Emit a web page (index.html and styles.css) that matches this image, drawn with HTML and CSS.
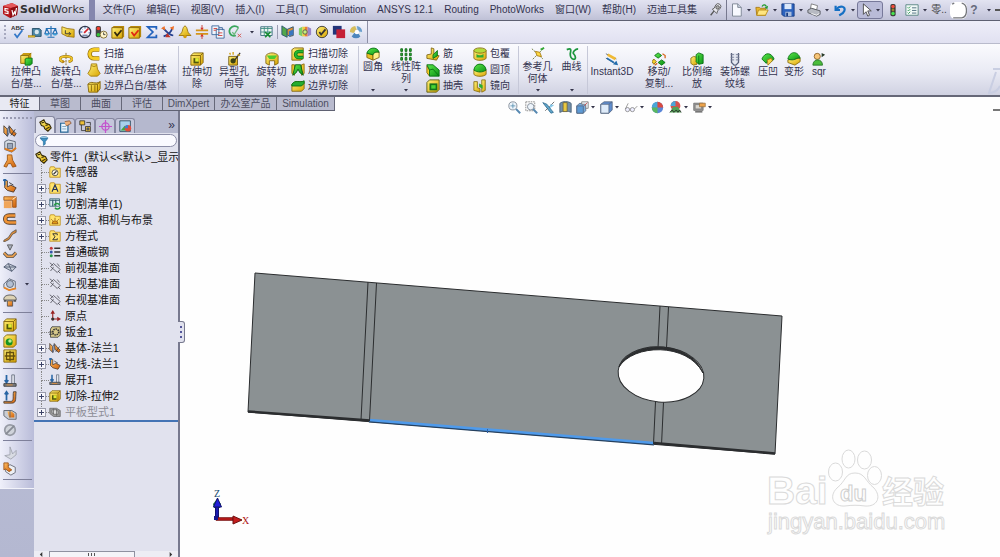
FILE: index.html
```html
<!DOCTYPE html>
<html lang="zh-CN">
<head>
<meta charset="utf-8">
<meta name="viewport" content="width=device-width, initial-scale=1">
<title>SolidWorks - 零件1</title>
<link rel="stylesheet" href="styles.css">
</head>
<body>
<svg class="sprite" aria-hidden="true">
<defs>
<linearGradient id="gold" x1="0" y1="0" x2="1" y2="1"><stop offset="0" stop-color="#fff27a"/><stop offset="1" stop-color="#d9a400"/></linearGradient>
<linearGradient id="green" x1="0" y1="0" x2="1" y2="1"><stop offset="0" stop-color="#5ce84a"/><stop offset="1" stop-color="#0b9416"/></linearGradient>
<linearGradient id="orange" x1="0" y1="0" x2="1" y2="1"><stop offset="0" stop-color="#ffbe62"/><stop offset="1" stop-color="#d0600a"/></linearGradient>
</defs>
<symbol id="caret" viewBox="0 0 6 6"><path d="M1 2h4L3 4.500z" fill="#333348"/></symbol>
<symbol id="logo" viewBox="0 0 16 16"><path d="M1 4 10 1l6 3-1 9-7 3-7-4z" fill="#b5161d"/><path d="M1 4l8 2 7-2-6-3z" fill="#e5585c"/><path d="M9 6l7-2-1 9-7 3z" fill="#8d0c13"/><path d="M6.500 7 3 6.500v2l3 1v2L2.500 11M10 8l1 5 1.500-3 .8 2 1.200-6" fill="none" stroke="#fff" stroke-width="1.200"/></symbol>
<symbol id="pin" viewBox="0 0 16 16"><path d="M3 14l4-5" stroke="#555" stroke-width="1.500"/><path d="M5 7l5 5 1-3 3-3a3 3 0 0 0-5-4L7 6z" fill="#e8e8ee" stroke="#555"/><circle cx="11" cy="5" r="2" fill="#aaa" stroke="#555"/></symbol>
<symbol id="new" viewBox="0 0 16 16"><path d="M4 1h6l4 4v10H4z" fill="#f7f9ff" stroke="#77808f"/><path d="M10 1v4h4" fill="#cdd6e6" stroke="#77808f"/></symbol>
<symbol id="open" viewBox="0 0 16 16"><path d="M1 5h4l1 1h6v8H2z" fill="#e9b62e" stroke="#a87912"/><path d="M4 8h11l-3 6H2z" fill="#ffe680" stroke="#b78a18"/><path d="M8 4c2-3 4-2 5 0" fill="none" stroke="#239a2d" stroke-width="1.500"/><path d="M15 3l-1 4-3-2z" fill="#239a2d"/></symbol>
<symbol id="save" viewBox="0 0 16 16"><path d="M1 1h14v14H3l-2-2z" fill="#2c62bd" stroke="#173b80"/><path d="M4 1h8v6H4z" fill="#dbe8fa"/><path d="M5 10h7v5H5z" fill="#aabddb"/><path d="M6 11h2v4H6z" fill="#173b80"/></symbol>
<symbol id="print" viewBox="0 0 16 16"><path d="M5 1l7 2-1 5-7-2z" fill="#fff" stroke="#777"/><path d="M1 8l4-2 10 3v4l-4 2-10-4z" fill="#b7bac2" stroke="#55585f"/><path d="M5 12l6 2 3-2" fill="none" stroke="#fff"/></symbol>
<symbol id="undo" viewBox="0 0 16 16"><path d="M3 3v5h5" fill="none" stroke="#1670c4" stroke-width="2.500"/><path d="M4 7c4-5 11-3 9 2-1 3-4 4-6 5" fill="none" stroke="#1670c4" stroke-width="2.500"/></symbol>
<symbol id="cursor" viewBox="0 0 16 16"><path d="M5 1v12l3-3 2 5 2-1-2-5h4z" fill="#fff" stroke="#444"/></symbol>
<symbol id="traffic" viewBox="0 0 16 16"><rect x="5" y="1" width="6" height="14" rx="2" fill="#3a3a36"/><circle cx="8" cy="4" r="2" fill="#f04a3c"/><circle cx="8" cy="8" r="1.600" fill="#9b8430"/><circle cx="8" cy="12" r="2" fill="#47e04f"/></symbol>
<symbol id="list" viewBox="0 0 16 16"><path d="M1 2h14v12H1z" fill="#f0f8f7" stroke="#54827f"/><path d="M3 5l1 1 2-2M3 8l1 1 2-2M3 11l1 1 2-2" fill="none" stroke="#27964a"/><path d="M8 5.500h5M8 8.500h5M8 11.500h5" stroke="#467"/></symbol>
<symbol id="disc" viewBox="0 0 16 16"><rect width="16" height="16" rx="5" fill="#fff"/><path d="M2 2l2-1M11 1c6 1 6 13 0 14H3" fill="none" stroke="#75777c" stroke-width="1.200"/></symbol>
<symbol id="spell" viewBox="0 0 16 16"><text x="0" y="6" font-family="Liberation Sans" font-size="7" font-weight="700" fill="#333">ABC</text><path d="M4 10l3 4 6-8" fill="none" stroke="#3478c8" stroke-width="2"/></symbol>
<symbol id="tape" viewBox="0 0 16 16"><path d="M5 4h8l2 2v7H5z" fill="#4d86a5" stroke="#244c64"/><circle cx="10" cy="8" r="2.500" fill="#d9e7ee"/><path d="M0 12h8v2H0z" fill="#e5bb31" stroke="#8b6f17" stroke-width=".5"/></symbol>
<symbol id="scale" viewBox="0 0 16 16"><path d="M8 1v12M2 4h12M4 14h8M3 4l-2 6h5L3 4M13 4l-3 6h5l-2-6" fill="none" stroke="#246fb3" stroke-width="1.300"/><path d="M1 10h5l-1 2H2zM10 10h5l-1 2h-3z" fill="#3fa0d8"/></symbol>
<symbol id="section" viewBox="0 0 16 16"><path d="M1 2l6 2 8 1v9l-8-1-6-3z" fill="url(#gold)" stroke="#9b7511"/><path d="M5 6v4h6M9 8l2 2-2 2" fill="none" stroke="#333"/></symbol>
<symbol id="gauge" viewBox="0 0 16 16"><circle cx="8" cy="8" r="6.500" fill="#f6f7fc" stroke="#32384a" stroke-width="1.500"/><path d="M7 9l5-5" stroke="#d1222c" stroke-width="2"/><path d="M8 2v2M2 8h3M12 9h2M4 4l1 1" stroke="#2250a0"/><path d="M5 12h6" stroke="#7a86a8" stroke-width="2"/></symbol>
<symbol id="trafclock" viewBox="0 0 16 16"><rect x="2" y="1" width="6" height="13" rx="2" fill="#444"/><circle cx="5" cy="4" r="2" fill="#f43b2c"/><circle cx="5" cy="11" r="2" fill="#31c83a"/><circle cx="11" cy="11" r="4" fill="#fff4ca" stroke="#7b682f"/><path d="M11 8.500V11h2" fill="none" stroke="#333"/></symbol>
<symbol id="checkgold" viewBox="0 0 16 16"><path d="M1 3l2-2h12v12l-2 2H1z" fill="#b6870a"/><path d="M1 3h12v12H1z" fill="url(#gold)" stroke="#8a670b"/><path d="M4 8l3 4 5-6" fill="none" stroke="#33290d" stroke-width="2"/></symbol>
<symbol id="checkred" viewBox="0 0 16 16"><path d="M1 3l2-2h12v12l-2 2H1z" fill="#b6870a"/><path d="M1 3h12v12H1z" fill="url(#gold)" stroke="#8a670b"/><path d="M4 8l3 4 5-6" fill="none" stroke="#e02712" stroke-width="2"/></symbol>
<symbol id="sigma" viewBox="0 0 16 16"><path d="M13 5V2H3l6 6-6 6h10v-3" fill="none" stroke="#2262bd" stroke-width="2"/></symbol>
<symbol id="arrows" viewBox="0 0 16 16"><path d="M2 3c2 2 6 8 12 9M13 3c-1 5-4 8-10 10" fill="none" stroke="#26418f" stroke-width="2"/><path d="M4 1L0 4l5 2zM15 1l-5 2 4 3z" fill="#f0732b"/><path d="M7 9l4 5H5z" fill="#c13427"/></symbol>
<symbol id="bell" viewBox="0 0 16 16"><path d="M8 1c4 2 1 7 7 11H1C7 8 4 3 8 1z" fill="url(#gold)" stroke="#987208"/><circle cx="8" cy="13" r="2" fill="#d29c0b"/></symbol>
<symbol id="thick" viewBox="0 0 16 16"><path d="M1 6h14M1 10h14" stroke="#d4941a" stroke-width="2"/><path d="M8 0v5M8 16v-5" stroke="#c4382b"/><path d="M6 3l2 3 2-3zM6 13l2-3 2 3z" fill="#d73427"/></symbol>
<symbol id="docs" viewBox="0 0 16 16"><path d="M1 1h8v10H1zM6 5h9v10H6z" fill="#f1f5fc" stroke="#3a669a"/><path d="M3 4h4M3 6h3M8 9h5M8 12h5" stroke="#d13b34"/><path d="M9 3h4v3" fill="none" stroke="#3a669a"/></symbol>
<symbol id="tol" viewBox="0 0 16 16"><path d="M12 3C7-1 0 3 2 9c1 3 4 4 7 3" fill="none" stroke="#39a65c" stroke-width="2"/><path d="M5 8l2 3 5-8" fill="none" stroke="#6bb97e" stroke-width="1.500"/><path d="M11 10l4 4m0-4l-4 4" stroke="#d24d46"/></symbol>
<symbol id="sheet" viewBox="0 0 16 16"><path d="M2 2h13v10H2z" fill="#eef7f3" stroke="#376a7c"/><path d="M2 4h13M6 2v10M10 2v10M2 8h13" stroke="#3f8d82"/><path d="M7 8l6 6m0-6l-6 6" stroke="#168c31" stroke-width="2"/></symbol>
<symbol id="flag" viewBox="0 0 16 16"><path d="M1 1l6 4v9l-6-3z" fill="#52a84a" stroke="#28516c"/><path d="M7 5l7-3v10l-4 1-3-2z" fill="#de9034" stroke="#28516c"/><path d="M9 7l5-2v6l-5 2z" fill="#3977c0"/></symbol>
<symbol id="book" viewBox="0 0 16 16"><path d="M1 4l4-2v11l-4-2z" fill="#7ccd64"/><path d="M5 2h3v11H5z" fill="#e9cf3e"/><path d="M8 2h3v11H8z" fill="#ed7c34"/><path d="M11 2l4 2v7l-4 2z" fill="#9a86c8"/><circle cx="8" cy="8" r="2.500" fill="#c6f078" stroke="#555"/></symbol>
<symbol id="okround" viewBox="0 0 16 16"><circle cx="8" cy="8" r="6.500" fill="url(#gold)" stroke="#333"/><path d="M5 8l2 3 5-6" fill="none" stroke="#333" stroke-width="2"/></symbol>
<symbol id="squares" viewBox="0 0 16 16"><path d="M1 1h10v10H1z" fill="#23357a"/><path d="M5 5h10v10H5z" fill="#c51f36"/></symbol>
<symbol id="ball" viewBox="0 0 16 16"><circle cx="8" cy="8" r="7" fill="#dce5ef"/><path d="M1 8a7 7 0 0 1 6-7l2 5-4 3z" fill="#d6bd5b"/><path d="M9 1a7 7 0 0 1 6 7l-5-1z" fill="#6c9fcd"/><path d="M3 13l3-4 5 1 2 3a7 7 0 0 1-10 0z" fill="#4d86bd"/><circle cx="9" cy="8" r="2.500" fill="#fff"/></symbol>
<symbol id="extrude" viewBox="0 0 16 16"><path d="M2 4l3-3h9v9l-3 3H2z" fill="#c89b12"/><path d="M2 4h9v9H2z" fill="url(#gold)" stroke="#8b6d10"/><path d="M11 4l3-3" stroke="#8b6d10"/><path d="M7 8l2-1h6v6l-2 2H7z" fill="url(#green)" stroke="#087014"/></symbol>
<symbol id="revolve" viewBox="0 0 16 16"><path d="M8 1v14" stroke="#806413" stroke-dasharray="3 1"/><path d="M5 11C-1 10 0 5 8 5s9 5 3 6" fill="none" stroke="#8b6d10" stroke-width="3"/><path d="M5 11C-1 10 0 5 8 5s9 5 3 6" fill="none" stroke="#f0c32a" stroke-width="2"/><path d="M4 9l3 2-3 2z" fill="#b77c0c"/></symbol>
<symbol id="sweep" viewBox="0 0 16 16"><path d="M14 3H8a5 5 0 0 0 0 10h6" fill="none" stroke="#8e6909" stroke-width="5"/><path d="M14 3H8a5 5 0 0 0 0 10h6" fill="none" stroke="#f4cb23" stroke-width="3.500"/></symbol>
<symbol id="loft" viewBox="0 0 16 16"><path d="M5 1h6l1 6 3 5-3 3H4l-3-3 3-5z" fill="url(#gold)" stroke="#a17a0c"/><path d="M5 3l3 1 3-1" fill="none" stroke="#a17a0c"/></symbol>
<symbol id="boundary" viewBox="0 0 16 16"><path d="M1 6c4-5 8 1 14-3v8l-3 4H2z" fill="url(#gold)" stroke="#806109"/><path d="M1 6h11l3-3M12 6v9M5 7v7M9 7v7" fill="none" stroke="#806109"/></symbol>
<symbol id="cut" viewBox="0 0 16 16"><path d="M1 4l3-3h11v11l-3 3H1z" fill="url(#gold)" stroke="#806109"/><path d="M1 4h11v11M12 4l3-3" fill="none" stroke="#806109"/><path d="M4 7h6v6H4z" fill="#50580b"/><path d="M6 7h4v4H6z" fill="#e1ed31"/></symbol>
<symbol id="hole" viewBox="0 0 16 16"><path d="M2 5h10v10H2z" fill="url(#gold)" stroke="#6e5615"/><circle cx="7" cy="10" r="3" fill="#3b4112"/><path d="M9 9l6-8" stroke="#333" stroke-width="1.500"/><path d="M3 1l1 2M7 0v3M12 3l3 1" stroke="#d4a414" stroke-width="1.500"/></symbol>
<symbol id="revcut" viewBox="0 0 16 16"><path d="M1 4c3-4 11-4 14 0v9l-4 2v-5H5v5l-4-2z" fill="url(#gold)" stroke="#826612"/><path d="M2 4h12l-3 4H5z" fill="#4bcb31"/></symbol>
<symbol id="sweepcut" viewBox="0 0 16 16"><path d="M1 3l3-2h10v12l-3 2H1z" fill="url(#gold)" stroke="#826612"/><path d="M14 5H9C4 5 4 12 9 12h5" fill="none" stroke="#0b7e19" stroke-width="4"/><path d="M14 5H9C4 5 4 12 9 12h5" fill="none" stroke="#25b92e" stroke-width="2"/></symbol>
<symbol id="loftcut" viewBox="0 0 16 16"><path d="M1 2h3v12l-3-2zM12 2l3-1v11l-3 2z" fill="#efc82c" stroke="#8b6d10"/><path d="M5 2h6l3 12-4-3-2-4-2 4-4 3z" fill="url(#green)" stroke="#075c12"/></symbol>
<symbol id="boundcut" viewBox="0 0 16 16"><path d="M1 6l4-3h10v8l-3 3H1z" fill="url(#gold)" stroke="#826612"/><path d="M1 6c4-6 9-1 14-4v3l-3 3H1z" fill="#27ac2e" stroke="#087014"/></symbol>
<symbol id="fillet" viewBox="0 0 16 16"><path d="M1 7l7 2v6l-7-3z" fill="#e7bf23" stroke="#826612"/><path d="M8 9c0-2 3-4 7-3v6l-7 3z" fill="#fff18b" stroke="#826612"/><path d="M1 7c2-7 12-8 14-1-4-1-7 1-7 3z" fill="url(#green)" stroke="#087014"/></symbol>
<symbol id="pattern" viewBox="0 0 16 16"><path d="M2 2h2v3H2zM7 2h2v3H7zM12 2h2v3h-2zM2 7h2v3H2zM7 7h2v3H7zM12 7h2v3h-2zM2 12h2v3H2zM7 12h2v3H7zM12 12h2v3h-2z" fill="#29b432" stroke="#116617"/></symbol>
<symbol id="rib" viewBox="0 0 16 16"><path d="M1 9l5-1V1l3 1v7l6 1-3 5-11-2z" fill="url(#gold)" stroke="#826612"/><path d="M8 9l5-5v6l-5 3z" fill="url(#green)" stroke="#087014"/></symbol>
<symbol id="draft" viewBox="0 0 16 16"><path d="M1 3l3 5v7L1 11z" fill="#f4cf28" stroke="#826612"/><path d="M1 2h7l7 6v7H4V8z" fill="url(#green)" stroke="#087014"/><path d="M4 8l4-1 7 8" fill="none" stroke="#087014"/></symbol>
<symbol id="shell" viewBox="0 0 16 16"><path d="M1 4l3-3h11v11l-3 3H1z" fill="url(#gold)" stroke="#555812"/><path d="M4 5h9v8H4z" fill="#13751c"/><path d="M6 7h5v4H6z" fill="#49d432"/></symbol>
<symbol id="wrap" viewBox="0 0 16 16"><path d="M1 4v9c3 3 11 3 14 0V4z" fill="url(#gold)" stroke="#8a7017"/><ellipse cx="8" cy="4" rx="7" ry="3" fill="#b3db3a" stroke="#8a7017"/><path d="M4 8c2 2 6 2 8 0v4H4z" fill="#2bac30"/></symbol>
<symbol id="dome" viewBox="0 0 16 16"><path d="M1 8v5c3 3 11 3 14 0V8z" fill="url(#gold)" stroke="#8a7017"/><path d="M1 8C2-1 14-1 15 8c-4 3-10 3-14 0z" fill="url(#green)" stroke="#087014"/></symbol>
<symbol id="mirror" viewBox="0 0 16 16"><path d="M1 3h4v7l3 1v4l-7-2z" fill="url(#gold)" stroke="#8a7017"/><path d="M10 1h4v12l-4 2z" fill="url(#gold)" stroke="#8a7017"/><path d="M7 5l4 2v4L7 9z" fill="#2bac30"/></symbol>
<symbol id="refgeo" viewBox="0 0 16 16"><path d="M1 2l13 12M14 2L2 14" stroke="#66722e" stroke-dasharray="2 1"/><path d="M5 5l5 1 2 5-5-1z" fill="#ffd943" stroke="#a87b10"/><path d="M11 3l4-2" stroke="#36aa38" stroke-width="2"/></symbol>
<symbol id="curve" viewBox="0 0 16 16"><path d="M2 3c7-3 4 3 4 5s1 6 4 6 2-4 0-6 2-6 5-6" fill="none" stroke="#1c963d" stroke-width="2"/></symbol>
<symbol id="instant" viewBox="0 0 16 16"><path d="M1 2l12 6M1 7l12 7" stroke="#5d6670"/><path d="M3 3l9 5" stroke="#f0ba35" stroke-width="3"/><path d="M2 7l8 5" stroke="#246dae" stroke-width="2"/><path d="M15 15l-6-1 4-4z" fill="#246dae"/></symbol>
<symbol id="move" viewBox="0 0 16 16"><path d="M7 1l4 3-4 3-4-3zM11 9l4 3-4 3-4-3z" fill="url(#green)" stroke="#087014"/><path d="M2 8l3 3-3 3-2-3z" fill="#f4cf28" stroke="#8a7017"/><path d="M12 2l3 2v3M6 13l-3 2" fill="none" stroke="#d76920" stroke-width="1.500"/></symbol>
<symbol id="scaleobj" viewBox="0 0 16 16"><path d="M1 7l3-2 4 1v8l-4 1-3-2z" fill="url(#gold)" stroke="#8a7017"/><path d="M7 3l3-2 5 2v10l-5 1-3-3z" fill="url(#green)" stroke="#087014"/><path d="M10 4v10" stroke="#087014"/></symbol>
<symbol id="thread" viewBox="0 0 16 16"><path d="M4 1v11l3 3h2l3-3V1" fill="#e5e8f1" stroke="#59617b" stroke-width="1.500"/><path d="M3 3h4M3 6h4M3 9h4M9 3h4M9 6h4M9 9h4" stroke="#737b96"/></symbol>
<symbol id="indent" viewBox="0 0 16 16"><path d="M1 8c4-9 11-7 14 0l-3 3-3-3-3 5z" fill="url(#green)" stroke="#087014"/><path d="M7 9l5-2 1 3-5 5z" fill="#f5d44c" stroke="#9c7b16"/></symbol>
<symbol id="deform" viewBox="0 0 16 16"><path d="M1 9l14-2v4l-6 4-8-3z" fill="url(#gold)" stroke="#8a7017"/><path d="M1 8C3-1 12-2 15 7c-5-1-6 4-14 1z" fill="url(#green)" stroke="#087014"/></symbol>
<symbol id="person" viewBox="0 0 16 16"><circle cx="6" cy="5" r="3.500" fill="#f7c578" stroke="#8b6128"/><path d="M1 15c0-8 11-8 11 0z" fill="#4bbd3b" stroke="#29752a"/><path d="M11 1l4 2-4 3z" fill="#273a28"/></symbol>
<symbol id="zoomfit" viewBox="0 0 16 16"><circle cx="6" cy="6" r="5" fill="#edf4fb" stroke="#77818e"/><path d="M3 6h6M6 3v6" stroke="#568fae"/><path d="M10 10l5 5" stroke="#5688b1" stroke-width="2.500"/></symbol>
<symbol id="zoomarea" viewBox="0 0 16 16"><path d="M1 1h11v11H1z" fill="none" stroke="#777" stroke-dasharray="2 1"/><circle cx="7" cy="7" r="4" fill="#edf4fb" stroke="#77818e"/><path d="M10 10l5 5" stroke="#5688b1" stroke-width="2.500"/></symbol>
<symbol id="prev" viewBox="0 0 16 16"><path d="M1 2l5 2 8 10-3 1z" fill="#5fa5c9" stroke="#316d91"/><path d="M15 1L9 7M7 9l-3 3" stroke="#555"/><path d="M10 4l5 1-5 4z" fill="#88c7e8"/></symbol>
<symbol id="secview" viewBox="0 0 16 16"><path d="M1 3c3-3 11-3 14 0v11c-3-2-11-2-14 0z" fill="#718fa9" stroke="#455c73"/><path d="M5 2h5v11H5z" fill="#e9c941" stroke="#6c643b"/></symbol>
<symbol id="orient" viewBox="0 0 16 16"><path d="M1 6l3-3h8v9l-3 3H1z" fill="#78aee1" stroke="#586880"/><path d="M1 6h8v9H1z" fill="#5c9ad6" stroke="#586880"/><path d="M7 1h8v8h-3V4H7z" fill="#f1f5fa" stroke="#777"/><path d="M10 6l4-4" stroke="#c44"/></symbol>
<symbol id="cube" viewBox="0 0 16 16"><path d="M1 4l4-3h10v10l-4 4H1z" fill="#5f8ed0" stroke="#586880"/><path d="M1 4h10v11H1z" fill="#deebf9" stroke="#586880"/><path d="M11 4l4-3" stroke="#586880"/></symbol>
<symbol id="glasses" viewBox="0 0 20 16"><circle cx="5" cy="11" r="3" fill="#eef" stroke="#777"/><circle cx="12" cy="11" r="3" fill="#eef" stroke="#777"/><path d="M2 10l4-8M8 11h1M15 10l4-4" fill="none" stroke="#777"/></symbol>
<symbol id="rgb" viewBox="0 0 16 16"><circle cx="8" cy="8" r="7" fill="#5a86d8"/><path d="M8 1v7H1a7 7 0 0 1 7-7z" fill="#4aa7d8"/><path d="M8 1a7 7 0 0 1 7 7H8z" fill="#d94b41"/><path d="M1 8h7v7a7 7 0 0 1-7-7z" fill="#59b860"/></symbol>
<symbol id="scene" viewBox="0 0 16 16"><circle cx="8" cy="6" r="6" fill="#d7514c"/><path d="M8 0v6H2a6 6 0 0 1 6-6z" fill="#4aa7d8"/><path d="M1 14l4-7h6l4 7z" fill="#53a257"/><path d="M1 14l3-3 2 3 3-3 2 3 2-3 2 3" fill="none" stroke="#222"/></symbol>
<symbol id="monitor" viewBox="0 0 18 16"><path d="M1 2h13v10H1z" fill="#999" stroke="#666"/><path d="M3 4h9v6H3z" fill="#d9d6cf" stroke="#777"/><path d="M9 2h8v5H9z" fill="#eda34b" stroke="#96703e"/><path d="M3 14h10" stroke="#666" stroke-width="2"/></symbol>
<symbol id="part" viewBox="0 0 16 16"><path d="M1 4l5-3 2 4 5 2 2 4-4 4-4-3-1-3-3-1z" fill="url(#gold)" stroke="#332706" stroke-width="1.300"/><path d="M3 5l3-1M8 8l3-1M9 12l4-2" stroke="#332706" stroke-width="1.300"/></symbol>
<symbol id="props" viewBox="0 0 16 16"><path d="M2 4h9v11H2z" fill="#e9f5ff" stroke="#2b6a98" stroke-width="1.500"/><path d="M4 8h5M4 11h5" stroke="#6f98b5"/><path d="M7 2l6-1 2 3-5 3-2-1" fill="#efb17c" stroke="#885839"/></symbol>
<symbol id="config" viewBox="0 0 16 16"><path d="M1 1h6v5H1zM8 8h6v6H8z" fill="#ecbf35" stroke="#333"/><path d="M3 6v7h5M9 3h5v4" fill="none" stroke="#333"/><circle cx="11" cy="11" r="2" fill="#555"/></symbol>
<symbol id="target" viewBox="0 0 16 16"><circle cx="8" cy="8" r="4.500" fill="none" stroke="#c354cd" stroke-width="1.500"/><path d="M8 0v16M0 8h16" stroke="#c354cd" stroke-width="1.500"/></symbol>
<symbol id="display" viewBox="0 0 16 16"><path d="M1 1h13v13H1z" fill="#a8d0ec" stroke="#254258"/><path d="M2 13l5-6 6 6z" fill="#45a742"/><circle cx="11" cy="10" r="4" fill="#df4d3d"/><path d="M11 6v4H7a4 4 0 0 1 4-4z" fill="#387fd5"/></symbol>
<symbol id="funnel" viewBox="0 0 16 16"><ellipse cx="8" cy="3" rx="6" ry="2" fill="#a9d7f2" stroke="#276b98"/><path d="M2 4l5 5v6l3-2V9l4-5z" fill="#3d91c4" stroke="#276b98"/></symbol>
<symbol id="folder" viewBox="0 0 16 16"><path d="M1 3l1-2h5l1 2h7v12H1z" fill="#ffe36c" stroke="#b98a14"/></symbol>
<symbol id="f-sensor" viewBox="0 0 16 16"><use href="#folder"/><circle cx="8" cy="9" r="4" fill="#fffbe6" stroke="#333"/><path d="M6 11l4-4" stroke="#333" stroke-width="1.500"/></symbol>
<symbol id="f-note" viewBox="0 0 16 16"><use href="#folder"/><path d="M4 13l4-9 4 9M6 10h5" fill="none" stroke="#26345c" stroke-width="1.600"/></symbol>
<symbol id="f-cut" viewBox="0 0 16 16"><path d="M1 1h13v10H1z" fill="#dceef2" stroke="#315a6d"/><path d="M1 3h13M5 2v9M9 2v9" stroke="#315a6d" stroke-width="1.500"/><path d="M7 10a4 4 0 0 1 7-1M15 12a4 4 0 0 1-7 1" fill="none" stroke="#1f9a3e" stroke-width="2"/></symbol>
<symbol id="f-light" viewBox="0 0 16 16"><use href="#folder"/><path d="M4 13a4 4 0 0 1 8 0zM8 8V5M5 9L3 7M11 9l2-2" fill="#e19a17" stroke="#8a4b12"/></symbol>
<symbol id="f-eq" viewBox="0 0 16 16"><use href="#folder"/><path d="M11 7V5H5l3 4-3 4h6v-2" fill="none" stroke="#333" stroke-width="1.300"/></symbol>
<symbol id="material" viewBox="0 0 16 16"><circle cx="3" cy="3" r="2" fill="#c33636"/><circle cx="3" cy="8" r="2" fill="#3454a8"/><circle cx="3" cy="13" r="2" fill="#27964a"/><path d="M7 3h8M7 8h8M7 13h8" stroke="#333" stroke-width="2"/></symbol>
<symbol id="plane" viewBox="0 0 16 16"><path d="M6 2l9 8-4 4-9-8zM1 1l5 4M2 12l4-5M11 2l3 4M12 12l3 3" fill="none" stroke="#44444e"/></symbol>
<symbol id="origin" viewBox="0 0 16 16"><path d="M5 14V2M3 12h10" fill="none" stroke="#922" stroke-width="1.500"/><path d="M5 0L2 5h6zM16 12l-5-3v6z" fill="#922"/><circle cx="5" cy="12" r="2" fill="#333"/></symbol>
<symbol id="sheetmetal" viewBox="0 0 16 16"><path d="M4 1h11v11l-3 3H2V4z" fill="#d8c98b" stroke="#333"/><circle cx="9" cy="8" r="4" fill="none" stroke="#333" stroke-dasharray="2 1" stroke-width="2"/><path d="M0 8h6M0 11h5" stroke="#333"/></symbol>
<symbol id="baseflange" viewBox="0 0 16 16"><path d="M1 2l4 4v8l-4-4zM7 2l1 8 5 4 2-3-4-4z" fill="url(#orange)" stroke="#443a35"/><path d="M5 6l2-3v7l-2 4z" fill="#b8c2d1" stroke="#48536b"/><path d="M9 13l5-7" stroke="#333"/></symbol>
<symbol id="edgeflange" viewBox="0 0 16 16"><path d="M5 2v7l4-2 6 3-3 5-7-2-3-3V1z" fill="url(#orange)" stroke="#49382d"/><path d="M2 0v7M0 2l2-2 2 2" fill="none" stroke="#2865a4" stroke-width="1.500"/><path d="M7 4l5 3" stroke="#333"/></symbol>
<symbol id="unfold" viewBox="0 0 16 16"><path d="M4 1v8M2 7l2 3 2-3" fill="none" stroke="#2865a4" stroke-width="2"/><path d="M10 1h3v11h-3z" fill="#e2e6ed" stroke="#687080"/><path d="M1 11h14v3H1z" fill="#7d8085" stroke="#3d3d3d"/><path d="M4 12h7v1H4z" fill="#e99133"/></symbol>
<symbol id="fold" viewBox="0 0 16 16"><path d="M4 12V2M2 5l2-3 2 3" fill="none" stroke="#2865a4" stroke-width="2"/><path d="M1 13h8c4 0 2-6 3-11h3c-1 7 1 13-5 13H1z" fill="url(#orange)" stroke="#4b4037"/></symbol>
<symbol id="flat" viewBox="0 0 16 16"><path d="M1 3h9l5 3v8H6l-5-4z" fill="#999" stroke="#666"/><path d="M4 5h5l3 2v4H7L4 9z" fill="#ddd" stroke="#666"/><path d="M6 3v8M10 4v9" stroke="#666"/></symbol>
<symbol id="convert" viewBox="0 0 16 16"><path d="M2 3l4-2 8 2v9l-4 3-8-3z" fill="#d9dfe7" stroke="#58606e"/><path d="M5 5h6v6H5z" fill="#9aa7bb" stroke="#58606e"/><path d="M2 11l8 3 5-4" fill="none" stroke="#e17b1b" stroke-width="2"/></symbol>
<symbol id="bend" viewBox="0 0 16 16"><path d="M5 1h5l1 6 4 7-4 1-2-4H6l-2 4-3-1 4-7z" fill="url(#orange)" stroke="#9c5313"/></symbol>
<symbol id="miter" viewBox="0 0 16 16"><path d="M1 2h14v12h-4V6H1z" fill="url(#orange)" stroke="#9b5316"/><path d="M1 7h9v8H1z" fill="#f0a55a"/><path d="M11 5l4-3" stroke="#fff"/></symbol>
<symbol id="hem" viewBox="0 0 16 16"><path d="M14 4H7C1 4 1 12 7 12h8" fill="none" stroke="#58402d" stroke-width="5"/><path d="M14 4H7C1 4 1 12 7 12h8" fill="none" stroke="#ef9336" stroke-width="3"/></symbol>
<symbol id="jog" viewBox="0 0 16 16"><path d="M1 14l5-3 4-6 5-3v3l-4 2-4 6-6 3z" fill="url(#orange)" stroke="#60574c"/></symbol>
<symbol id="sketchbend" viewBox="0 0 16 16"><path d="M5 1h6L8 7z" fill="#aab1bd" stroke="#555"/><path d="M1 10l4 4h6l4-4" fill="none" stroke="#555" stroke-width="4"/><path d="M1 10l4 4h6l4-4" fill="none" stroke="#efa14d" stroke-width="2"/></symbol>
<symbol id="cross" viewBox="0 0 16 16"><path d="M1 8l5-4 9 4-5 5z" fill="#c5ccd7" stroke="#515c72"/><path d="M6 4l4 9M1 8h14" stroke="#515c72"/></symbol>
<symbol id="corner" viewBox="0 0 16 16"><path d="M1 8l6-6 7 3v8l-7 2-6-3z" fill="#dfe4ec" stroke="#576071"/><circle cx="8" cy="8" r="4" fill="#b3c0d4" stroke="#576071"/><path d="M1 12l6 3 8-2" fill="none" stroke="#e98523" stroke-width="2"/></symbol>
<symbol id="form" viewBox="0 0 16 16"><path d="M1 6c1-5 13-5 14 0v2H1z" fill="#ddd2b4" stroke="#555"/><path d="M5 9h6v6H5z" fill="url(#orange)" stroke="#555"/><path d="M1 9h3M12 9h3" stroke="#555" stroke-width="2"/></symbol>
<symbol id="simplehole" viewBox="0 0 16 16"><path d="M1 4l3-3h11v11l-3 3H1z" fill="url(#gold)" stroke="#806109"/><circle cx="7" cy="9" r="4" fill="#159323"/><circle cx="8" cy="8" r="2" fill="#bcf18e"/></symbol>
<symbol id="vent" viewBox="0 0 16 16"><path d="M1 1h14v14H1z" fill="url(#gold)" stroke="#806109"/><path d="M8 2v12M2 8h12M4 4h8v8H4z" fill="none" stroke="#65500d" stroke-width="1.500"/></symbol>
<symbol id="flatten" viewBox="0 0 16 16"><path d="M1 4h9l5 3v7H6l-5-4z" fill="#c9cdd4" stroke="#59606b"/><path d="M5 5h5l3 3v4H7z" fill="url(#orange)"/><path d="M8 4v8" stroke="#59606b"/></symbol>
<symbol id="nobend" viewBox="0 0 16 16"><circle cx="8" cy="8" r="6" fill="#cfd3da" stroke="#979ba5" stroke-width="2"/><path d="M3 13L13 3" stroke="#878b95" stroke-width="2"/></symbol>
<symbol id="rip" viewBox="0 0 16 16"><path d="M8 1v9l-6 1 7 4 6-5V5l-4 4z" fill="#d8dbe2" stroke="#a0a4ae"/></symbol>
<symbol id="insertbend" viewBox="0 0 16 16"><path d="M3 6l5-3 6 3v6l-5 3-6-4z" fill="#eceff4" stroke="#636773"/><path d="M1 1h5v5l4 3-3 2-4-3-2 1z" fill="url(#orange)" stroke="#9b5316"/></symbol>
</svg>

<div class="app">
  <header class="titlebar">
    <div class="brand"><svg class="ic"><use href="#logo"/></svg><span class="brand-name"><b>Solid</b>Works</span></div>
    <nav class="menus" aria-label="主菜单">
      <button>文件(F)</button><button>编辑(E)</button><button>视图(V)</button><button>插入(I)</button><button>工具(T)</button><button>Simulation</button><button>ANSYS 12.1</button><button>Routing</button><button>PhotoWorks</button><button>窗口(W)</button><button>帮助(H)</button><button>迈迪工具集</button>
      <button aria-label="固定菜单"><svg class="ic"><use href="#pin"/></svg></button>
    </nav>
    <div class="quick">
      <button aria-label="新建"><svg class="ic"><use href="#new"/></svg><svg class="caret"><use href="#caret"/></svg></button>
      <button aria-label="打开"><svg class="ic"><use href="#open"/></svg><svg class="caret"><use href="#caret"/></svg></button>
      <button aria-label="保存"><svg class="ic"><use href="#save"/></svg><svg class="caret"><use href="#caret"/></svg></button>
      <button aria-label="打印"><svg class="ic"><use href="#print"/></svg><svg class="caret"><use href="#caret"/></svg></button>
      <button aria-label="撤消"><svg class="ic"><use href="#undo"/></svg><svg class="caret"><use href="#caret"/></svg></button>
      <button class="picked" aria-label="选择"><svg class="ic"><use href="#cursor"/></svg><svg class="caret"><use href="#caret"/></svg></button>
      <button aria-label="重建模型"><svg class="ic"><use href="#traffic"/></svg></button>
      <button aria-label="选项"><svg class="ic"><use href="#list"/></svg><svg class="caret"><use href="#caret"/></svg></button>
      <button class="more">零..</button>
      <button aria-label="搜索"><svg class="ic"><use href="#disc"/></svg></button>
      <button class="help">?<svg class="caret"><use href="#caret"/></svg></button>
      <button class="min" aria-label="最小化"></button>
    </div>
  </header>

  <div class="toolrow">
    <div class="tools">
      <div class="tools-a">
        <button aria-label="拼写检验"><svg class="ic"><use href="#spell"/></svg></button>
        <button aria-label="测量"><svg class="ic"><use href="#tape"/></svg></button>
        <button aria-label="质量特性"><svg class="ic"><use href="#scale"/></svg></button>
        <button aria-label="截面属性"><svg class="ic"><use href="#section"/></svg></button>
        <button aria-label="传感器"><svg class="ic"><use href="#gauge"/></svg></button>
        <button aria-label="性能评估"><svg class="ic"><use href="#trafclock"/></svg></button>
        <button aria-label="检查"><svg class="ic"><use href="#checkgold"/></svg></button>
        <button aria-label="输入诊断"><svg class="ic"><use href="#checkred"/></svg></button>
        <button aria-label="方程式"><svg class="ic"><use href="#sigma"/></svg></button>
        <button aria-label="误差分析"><svg class="ic"><use href="#arrows"/></svg></button>
        <button aria-label="拔模分析"><svg class="ic"><use href="#bell"/></svg></button>
        <button aria-label="厚度分析"><svg class="ic"><use href="#thick"/></svg></button>
        <button aria-label="比较文档"><svg class="ic"><use href="#docs"/></svg></button>
        <button aria-label="公差分析"><svg class="ic"><use href="#tol"/></svg></button>
      </div>
      <svg class="caret"><use href="#caret"/></svg>
      <button aria-label="设计表"><svg class="ic"><use href="#sheet"/></svg></button>
      <div class="tools-b">
        <button aria-label="仿真"><svg class="ic"><use href="#flag"/></svg></button>
        <button aria-label="流体"><svg class="ic"><use href="#book"/></svg></button>
        <button aria-label="设计检查"><svg class="ic"><use href="#okround"/></svg></button>
        <button aria-label="比较"><svg class="ic"><use href="#squares"/></svg></button>
        <button aria-label="渲染"><svg class="ic"><use href="#ball"/></svg></button>
      </div>
    </div>
  </div>

  <div class="ribbon">
    <div class="group g-boss">
      <button class="big"><svg class="ic"><use href="#extrude"/></svg><span>拉伸凸<br>台/基...</span></button>
      <button class="big"><svg class="ic"><use href="#revolve"/></svg><span>旋转凸<br>台/基...</span></button>
      <div class="stack">
        <button><svg class="ic"><use href="#sweep"/></svg>扫描</button>
        <button><svg class="ic"><use href="#loft"/></svg>放样凸台/基体</button>
        <button><svg class="ic"><use href="#boundary"/></svg>边界凸台/基体</button>
      </div>
    </div>
    <div class="group g-cut">
      <button class="big"><svg class="ic"><use href="#cut"/></svg><span>拉伸切<br>除</span></button>
      <button class="big"><svg class="ic"><use href="#hole"/></svg><span>异型孔<br>向导</span></button>
      <button class="big"><svg class="ic"><use href="#revcut"/></svg><span>旋转切<br>除</span></button>
      <div class="stack">
        <button><svg class="ic"><use href="#sweepcut"/></svg>扫描切除</button>
        <button><svg class="ic"><use href="#loftcut"/></svg>放样切割</button>
        <button><svg class="ic"><use href="#boundcut"/></svg>边界切除</button>
      </div>
    </div>
    <div class="group g-feat">
      <button class="big drop"><svg class="ic"><use href="#fillet"/></svg><span>圆角</span><svg class="caret"><use href="#caret"/></svg></button>
      <button class="big drop"><svg class="ic"><use href="#pattern"/></svg><span>线性阵<br>列</span><svg class="caret"><use href="#caret"/></svg></button>
      <div class="stack">
        <button><svg class="ic"><use href="#rib"/></svg>筋</button>
        <button><svg class="ic"><use href="#draft"/></svg>拔模</button>
        <button><svg class="ic"><use href="#shell"/></svg>抽壳</button>
      </div>
      <div class="stack">
        <button><svg class="ic"><use href="#wrap"/></svg>包覆</button>
        <button><svg class="ic"><use href="#dome"/></svg>圆顶</button>
        <button><svg class="ic"><use href="#mirror"/></svg>镜向</button>
      </div>
    </div>
    <div class="group g-ref">
      <button class="big drop"><svg class="ic"><use href="#refgeo"/></svg><span>参考几<br>何体</span><svg class="caret"><use href="#caret"/></svg></button>
      <button class="big drop"><svg class="ic"><use href="#curve"/></svg><span>曲线</span><svg class="caret"><use href="#caret"/></svg></button>
    </div>
    <div class="group g-misc">
      <button class="big"><svg class="ic"><use href="#instant"/></svg><span>Instant3D</span></button>
      <button class="big"><svg class="ic"><use href="#move"/></svg><span>移动/<br>复制...</span></button>
      <button class="big"><svg class="ic"><use href="#scaleobj"/></svg><span>比例缩<br>放</span></button>
      <button class="big"><svg class="ic"><use href="#thread"/></svg><span>装饰螺<br>纹线</span></button>
      <button class="big"><svg class="ic"><use href="#indent"/></svg><span>压凹</span></button>
      <button class="big"><svg class="ic"><use href="#deform"/></svg><span>变形</span></button>
      <button class="big"><svg class="ic"><use href="#person"/></svg><span>sqr</span></button>
    </div>
    <svg class="ds" viewBox="0 0 12 26" aria-hidden="true"><path d="M5 1h7M8 4L1 25c5 0 9-3 11-7" fill="none" stroke="#c9cee2" stroke-width="2"/></svg>
  </div>

  <div class="tabrow">
    <div class="tabs" role="tablist">
      <button class="tab on" role="tab" aria-selected="true">特征</button><button class="tab" role="tab">草图</button><button class="tab" role="tab">曲面</button><button class="tab" role="tab">评估</button><button class="tab" role="tab">DimXpert</button><button class="tab" role="tab">办公室产品</button><button class="tab" role="tab">Simulation</button>
    </div>
    <div class="headsup">
      <button aria-label="整屏显示全图"><svg class="ic"><use href="#zoomfit"/></svg></button>
      <button aria-label="局部放大"><svg class="ic"><use href="#zoomarea"/></svg></button>
      <button aria-label="上一视图"><svg class="ic"><use href="#prev"/></svg></button>
      <button aria-label="剖面视图"><svg class="ic"><use href="#secview"/></svg></button>
      <button aria-label="视图定向"><svg class="ic"><use href="#orient"/></svg><svg class="caret"><use href="#caret"/></svg></button>
      <button aria-label="显示样式"><svg class="ic"><use href="#cube"/></svg><svg class="caret"><use href="#caret"/></svg></button>
      <button aria-label="隐藏/显示项目"><svg class="ic wide"><use href="#glasses"/></svg><svg class="caret"><use href="#caret"/></svg></button>
      <button class="solo" aria-label="编辑外观"><svg class="ic"><use href="#rgb"/></svg></button>
      <button aria-label="应用布景"><svg class="ic"><use href="#scene"/></svg><svg class="caret"><use href="#caret"/></svg></button>
      <button aria-label="视图设定"><svg class="ic"><use href="#monitor"/></svg><svg class="caret"><use href="#caret"/></svg></button>
    </div>
    <button class="docmin" aria-label="最小化文档"></button>
  </div>

  <main class="work">
    <aside class="side" aria-label="钣金工具栏">
      <div class="side-tools">
        <div class="sg s1">
          <button aria-label="基体法兰"><svg class="ic"><use href="#baseflange"/></svg></button>
          <button aria-label="转换到钣金"><svg class="ic"><use href="#convert"/></svg></button>
          <button aria-label="放样折弯"><svg class="ic"><use href="#bend"/></svg></button>
        </div>
        <div class="sg s2">
          <button aria-label="边线法兰"><svg class="ic"><use href="#edgeflange"/></svg></button>
          <button aria-label="斜接法兰"><svg class="ic"><use href="#miter"/></svg></button>
          <button aria-label="褶边"><svg class="ic"><use href="#hem"/></svg></button>
          <button aria-label="转折"><svg class="ic"><use href="#jog"/></svg></button>
          <button aria-label="绘制的折弯"><svg class="ic"><use href="#sketchbend"/></svg></button>
          <button aria-label="交叉折断"><svg class="ic"><use href="#cross"/></svg></button>
          <button aria-label="边角"><svg class="ic"><use href="#corner"/></svg><svg class="caret"><use href="#caret"/></svg></button>
          <button aria-label="成形工具"><svg class="ic"><use href="#form"/></svg></button>
        </div>
        <div class="sg s3">
          <button aria-label="拉伸切除"><svg class="ic"><use href="#cut"/></svg></button>
          <button aria-label="简单直孔"><svg class="ic"><use href="#simplehole"/></svg></button>
          <button aria-label="通风口"><svg class="ic"><use href="#vent"/></svg></button>
        </div>
        <div class="sg s4">
          <button aria-label="展开"><svg class="ic"><use href="#unfold"/></svg></button>
          <button aria-label="折叠"><svg class="ic"><use href="#fold"/></svg></button>
          <button aria-label="展平"><svg class="ic"><use href="#flatten"/></svg></button>
          <button aria-label="不折弯"><svg class="ic"><use href="#nobend"/></svg></button>
        </div>
        <div class="sg s5">
          <button aria-label="切口"><svg class="ic"><use href="#rip"/></svg></button>
          <button aria-label="插入折弯"><svg class="ic"><use href="#insertbend"/></svg></button>
        </div>
      </div>
    </aside>

    <section class="panel">
      <div class="ptabs">
        <button class="ptab on" aria-label="特征树"><svg class="ic"><use href="#part"/></svg></button>
        <button class="ptab" aria-label="属性"><svg class="ic"><use href="#props"/></svg></button>
        <button class="ptab" aria-label="配置"><svg class="ic"><use href="#config"/></svg></button>
        <button class="ptab" aria-label="尺寸专家"><svg class="ic"><use href="#target"/></svg></button>
        <button class="ptab" aria-label="显示管理"><svg class="ic"><use href="#display"/></svg></button>
        <button class="chev" aria-label="展开面板">»</button>
      </div>
      <label class="filter"><svg class="ic"><use href="#funnel"/></svg><input type="text" aria-label="过滤"></label>
      <div class="root"><svg class="ic"><use href="#part"/></svg><span>零件1&nbsp; (默认&lt;&lt;默认&gt;_显示</span></div>
      <ul class="tree">
        <li><svg class="ic"><use href="#f-sensor"/></svg>传感器</li>
        <li><button class="exp" aria-label="展开"></button><svg class="ic"><use href="#f-note"/></svg>注解</li>
        <li><button class="exp" aria-label="展开"></button><svg class="ic"><use href="#f-cut"/></svg>切割清单(1)</li>
        <li><button class="exp" aria-label="展开"></button><svg class="ic"><use href="#f-light"/></svg>光源、相机与布景</li>
        <li><button class="exp" aria-label="展开"></button><svg class="ic"><use href="#f-eq"/></svg>方程式</li>
        <li><svg class="ic"><use href="#material"/></svg>普通碳钢</li>
        <li><svg class="ic"><use href="#plane"/></svg>前视基准面</li>
        <li><svg class="ic"><use href="#plane"/></svg>上视基准面</li>
        <li><svg class="ic"><use href="#plane"/></svg>右视基准面</li>
        <li><svg class="ic"><use href="#origin"/></svg>原点</li>
        <li><svg class="ic"><use href="#sheetmetal"/></svg>钣金1</li>
        <li><button class="exp" aria-label="展开"></button><svg class="ic"><use href="#baseflange"/></svg>基体-法兰1</li>
        <li><button class="exp" aria-label="展开"></button><svg class="ic"><use href="#edgeflange"/></svg>边线-法兰1</li>
        <li><svg class="ic"><use href="#unfold"/></svg>展开1</li>
        <li><button class="exp" aria-label="展开"></button><svg class="ic"><use href="#cut"/></svg>切除-拉伸2</li>
        <li class="off"><button class="exp" aria-label="展开"></button><svg class="ic"><use href="#flat"/></svg>平板型式1</li>
      </ul>
      <div class="hscroll"><button class="sarrow" aria-label="向左"><svg viewBox="0 0 6 6"><path d="M4 0v6L1 3z"/></svg></button><div class="thumb"></div><button class="sarrow" aria-label="向右"><svg viewBox="0 0 6 6"><path d="M2 0v6l3-3z"/></svg></button></div>
      <button class="splitter" aria-label="折叠面板"><i></i><i></i><i></i></button>
    </section>

    <section class="canvas" aria-label="图形区域">
      <svg class="model" viewBox="180 111 820 446" preserveAspectRatio="xMinYMin meet">
        <path d="M255 273 782 316 775 454 248 412z" fill="#8b9193" stroke="#2b2d2f"/>
        <path d="M248 411.500 370 420.500M654 443l121 10.500" stroke="#2b2d2f" stroke-width="2.500"/>
        <path d="M369 421.500 654 444.500" stroke="#26415f" stroke-width="2"/>
        <path d="M369 420 654 443" stroke="#4f9aea" stroke-width="2.500"/>
        <path d="M368 282 361 420M376.500 283 369.500 421M660 306l-2 42M668.500 307l-2 41M655.500 402l-2 42M663.500 402l-2 43" stroke="#2b2d2f" fill="none"/>
        <path d="M487.500 429v4" stroke="#2f63a8"/>
        <ellipse cx="661" cy="374.500" rx="43" ry="27.500" transform="rotate(5 661 374.500)" fill="#fefefe" stroke="#2b2d2f"/>
        <path d="M619 367C630 341 689 338 703 373 687 342 633 344 619 367z" fill="#2b2d2f" stroke="#2b2d2f"/>
        <g class="triad">
          <path d="M213 504l4-5 4 5-1 4h-6z" fill="#156b3c"/>
          <path d="M215.500 518V505h3V518z" fill="#1b1bb0" stroke="#11116f"/>
          <path d="M217.500 498l-4 9h8z" fill="#2020d8" stroke="#11116f"/>
          <path d="M216 517.500h17v3h-17z" fill="#b01717" stroke="#6d1010" stroke-width=".6"/>
          <path d="M242 520l-9-4v8z" fill="#c41d1d" stroke="#6d1010"/>
          <path d="M214 516h4v4h-4z" fill="#16168c"/>
          <text x="214" y="497" class="axis z">Z</text><text x="242" y="524" class="axis x">X</text>
        </g>
        <g class="mark">
          <text x="767" y="504" class="wm-a">Bai</text>
          <ellipse cx="835.500" cy="472" rx="7" ry="9"/><ellipse cx="848.500" cy="459" rx="6.500" ry="9"/><ellipse cx="864.500" cy="460" rx="7" ry="9"/><ellipse cx="874.500" cy="475.500" rx="7" ry="9"/>
          <path d="M855 473c-10 0-9 8-18 15-9 9-3 19 8 18 7-1 13-1 20 0 12 1 17-9 9-18-9-7-9-15-19-15z"/>
          <text x="840" y="501" class="wm-b">du</text>
          <text x="882" y="503" class="wm-c">经验</text>
          <text x="768" y="529" class="wm-d">jingyan.baidu.com</text>
        </g>
      </svg>
    </section>
  </main>
</div>
</body>
</html>
```
FILE: styles.css
```css
* { box-sizing: border-box; }

body {
  margin: 0;
  overflow: hidden;
  background: #fefefe;
  color: #33334f;
  font: 10px/12px "Liberation Sans", "Noto Sans CJK SC", sans-serif;
}

button {
  display: flex;
  align-items: center;
  justify-content: center;
  margin: 0;
  padding: 0;
  border: 0;
  background: none;
  color: inherit;
  font: inherit;
  white-space: nowrap;
}

.sprite { position: absolute; width: 0; height: 0; }
.ic { display: block; flex: none; width: 14px; height: 14px; }
.caret { display: block; flex: none; width: 6px; height: 6px; }

.app {
  display: grid;
  grid-template-rows: 21px 23px 53px 14px 1fr;
  grid-template-columns: minmax(0, 1fr);
  height: 100vh;
}

/* Title bar */
.titlebar {
  display: flex;
  background: linear-gradient(#e2e3f1, #d2d3e5 50%, #bfc1d6);
  border-bottom: 1px solid #5e6072;
}
.brand {
  display: flex;
  align-items: center;
  gap: 2px;
  width: 97px;
  padding-left: 2px;
  border-right: 6px solid #8587ae;
}
.brand .ic { width: 16px; height: 16px; }
.brand-name { font: 11px/16px "DejaVu Sans", sans-serif; color: #333; }
.menus {
  display: flex;
  align-items: center;
  gap: 11px;
  padding: 0 4px 0 8px;
  border-right: 1px solid #77798f;
}
.quick { display: flex; flex: 1; align-items: center; }
.quick button { width: 26px; height: 18px; gap: 3px; }
.quick .picked { border: 1px solid #77799a; border-radius: 3px; background: #b9bbd8; gap: 2px; }
.quick .picked + button { width: 20px; }
.quick .more { width: 20px; color: #444; }
.quick .more + button { width: 18px; }
.quick .more + button .ic { width: 17px; height: 17px; }
.quick .help { width: 28px; gap: 8px; font-weight: 700; font-size: 12px; color: #666a7c; }
.quick .min { width: 5px; height: 2px; background: #555; }

/* Tool row */
.toolrow { background: linear-gradient(#eeeef9, #e1e1f1); border-bottom: 1px solid #b9bbcc; }
.tools {
  display: flex;
  align-items: center;
  width: 368px;
  height: 22px;
  padding-left: 4px;
  background: linear-gradient(#f5f6fd, #d3d5e8);
  border-right: 1px solid #8e90a6;
}
.tools-a {
  display: flex;
  justify-content: space-between;
  width: 238px;
  padding-left: 5px;
  border-left: 2px dotted #a7a9bf;
}
.tools > .caret { margin: 0 4px 0 7px; }
.tools-b {
  display: flex;
  gap: 3px;
  margin-left: 4px;
  padding-left: 3px;
  border-left: 1px solid #9b9db2;
}

/* Ribbon */
.ribbon {
  display: flex;
  align-items: flex-start;
  padding: 2px 0 0 6px;
  background: linear-gradient(#fbfbfe, #e9eaf4 55%, #d0d2e2);
  border-bottom: 2px solid #666878;
}
.group { display: grid; height: 48px; border-right: 1px solid #c6c8d8; }
.g-boss { grid-template-columns: 40px 40px 92px; }
.g-cut { grid-template-columns: 36px 38px 37px 68px; }
.g-feat { grid-template-columns: 28px 38px 47px 46px; }
.g-ref { grid-template-columns: 37px 31px; }
.g-misc { grid-template-columns: 48px 46px 30px 46px 20px 32px 18px; border-right: 0; }
.big {
  position: relative;
  flex-direction: column;
  justify-content: flex-start;
  height: 48px;
  padding-top: 6px;
  text-align: center;
}
.big.drop { padding-top: 1px; }
.big .caret { position: absolute; left: calc(50% - 3px); bottom: 1px; }
.stack { display: grid; grid-template-rows: repeat(3, 16px); padding-left: 1px; }
.stack button { justify-content: flex-start; gap: 3px; }
.ds { width: 12px; height: 26px; margin: 22px 0 0 auto; }

/* Command tabs and view toolbar */
.tabrow { position: relative; display: flex; background: #fefefe; }
.tabs {
  display: grid;
  grid-template-columns: 40px 41px 41px 41px 52px 62px 58px;
  border-bottom: 1px solid #5f6172;
}
.tab {
  background: #b9bbce;
  border-right: 1px solid #666879;
  color: #4c4d5f;
}
.tab.on { background: #e8e9f3; color: #222; }
.headsup {
  position: absolute;
  left: 508px;
  top: 2px;
  display: flex;
  align-items: center;
  gap: 4px;
}
.headsup button { height: 16px; gap: 1px; }
.headsup .ic { width: 13px; height: 13px; }
.headsup .wide { width: 14px; }
.headsup .solo { margin: 0 1px 0 2px; }
.docmin { position: absolute; right: 0; top: 12px; width: 7px; height: 2px; background: #777; }

/* Work area */
.work { display: flex; min-height: 0; }
.side { flex: none; width: 34px; background: linear-gradient(#c2c5db, #b4b8d1); }
.side-tools {
  padding: 6px 2px 8px 3px;
  border-bottom: 1px solid #f2f3fa;
  background: linear-gradient(90deg, #eff0fa, #b9bcd9);
}
.sg {
  display: flex;
  flex-direction: column;
  justify-content: space-between;
  padding: 5px 0;
  border-bottom: 1px solid #7e809a;
}
.sg button { justify-content: flex-start; height: 14px; gap: 7px; }
.s1 { height: 57px; padding-top: 5px; border-top: 2px dotted #999bb2; }
.s2 { height: 139px; }
.s3 { height: 56px; }
.s4 { height: 72px; padding-bottom: 3px; }
.s5 { height: 39px; padding-bottom: 3px; }

.panel {
  position: relative;
  flex: none;
  display: flex;
  flex-direction: column;
  width: 146px;
  background: #e1e2ee;
  border-right: 2px solid #77798e;
}
.ptabs {
  display: flex;
  align-items: flex-end;
  height: 22px;
  padding-left: 1px;
  background: #b5b8ce;
}
.ptab { width: 20px; height: 15px; border: 1px solid #8688a0; border-bottom: 0; border-radius: 3px 3px 0 0; background: #c5c7db; }
.ptab .ic { width: 13px; height: 13px; }
.ptab.on { background: #e1e2ee; height: 17px; }
.chev { margin-left: auto; padding: 0 3px 2px 0; font-size: 12px; }
.filter {
  display: flex;
  align-items: center;
  height: 13px;
  margin: 1px 1px 3px 1px;
  padding-left: 3px;
  border: 1px solid #8b8da6;
  border-radius: 7px;
  background: #fafaff;
}
.filter .ic { width: 10px; height: 10px; }
.filter input { flex: 1; min-width: 0; height: 10px; border: 0; padding: 0 3px; background: none; font: inherit; outline: 0; }
.root {
  display: flex;
  align-items: center;
  gap: 2px;
  height: 14px;
  padding-left: 1px;
  overflow: hidden;
  color: #111;
  font-size: 11px;
  white-space: nowrap;
}
.root .ic { width: 13px; height: 13px; }
.tree {
  margin: 0;
  padding: 0 0 0 7px;
  border-bottom: 2px solid #4474b5;
  list-style: none;
  color: #111;
  font-size: 11px;
}
.tree li {
  position: relative;
  display: flex;
  align-items: center;
  gap: 4px;
  height: 16px;
  padding-left: 8px;
  white-space: nowrap;
}
.tree li::before {
  content: "";
  position: absolute;
  left: 0;
  top: 0;
  width: 7px;
  height: 8px;
  border-left: 1px dotted #888;
  border-bottom: 1px dotted #888;
}
.tree li:not(:last-child)::after {
  content: "";
  position: absolute;
  left: 0;
  top: 8px;
  height: 8px;
  border-left: 1px dotted #888;
}
.tree .ic { width: 12px; height: 12px; }
.exp {
  position: absolute;
  z-index: 1;
  left: -4px;
  top: 4px;
  width: 9px;
  height: 9px;
  border: 1px solid #9a9cac;
  background:
    linear-gradient(#3c4468, #3c4468) center / 5px 1px no-repeat,
    linear-gradient(#3c4468, #3c4468) center / 1px 5px no-repeat,
    #f6f6fb;
}
.tree .off { color: #8d8d96; }
.hscroll { display: flex; align-items: flex-start; height: 6px; margin-top: auto; background: #ededf4; }
.sarrow { width: 15px; height: 6px; }
.sarrow svg { width: 5px; height: 5px; fill: #333; }
.thumb {
  flex: none;
  width: 86px;
  height: 6px;
  margin-right: auto;
  border: 1px solid #8f91a0;
  border-bottom: 0;
  background: repeating-linear-gradient(90deg, #555 0 1px, transparent 1px 3px) center / 9px 3px no-repeat, #f4f4f8;
}
.splitter {
  position: absolute;
  z-index: 2;
  right: -7px;
  top: 210px;
  flex-direction: column;
  gap: 3px;
  width: 7px;
  height: 22px;
  border: 1px solid #77798e;
  border-left: 0;
  border-radius: 0 3px 3px 0;
  background: #e1e2ee;
}
.splitter i { width: 2px; height: 2px; background: #55579a; }

.canvas { flex: 1; min-width: 0; background: #fefefe; }
.model { display: block; width: 100%; height: auto; }
.axis { font: 10px "Liberation Serif", serif; }
.z { fill: #184a6e; }
.x { fill: #b01717; }
.mark { fill: #fefefe; stroke: #dadada; stroke-width: 1px; }
.wm-a { font: 700 39px "Liberation Sans", sans-serif; }
.wm-b { font: 700 22px "Liberation Sans", sans-serif; stroke: #cfcfcf; }
.wm-c { font: 700 31px "Noto Sans CJK SC", sans-serif; }
.wm-d { font: 22px "Liberation Sans", sans-serif; }
```
